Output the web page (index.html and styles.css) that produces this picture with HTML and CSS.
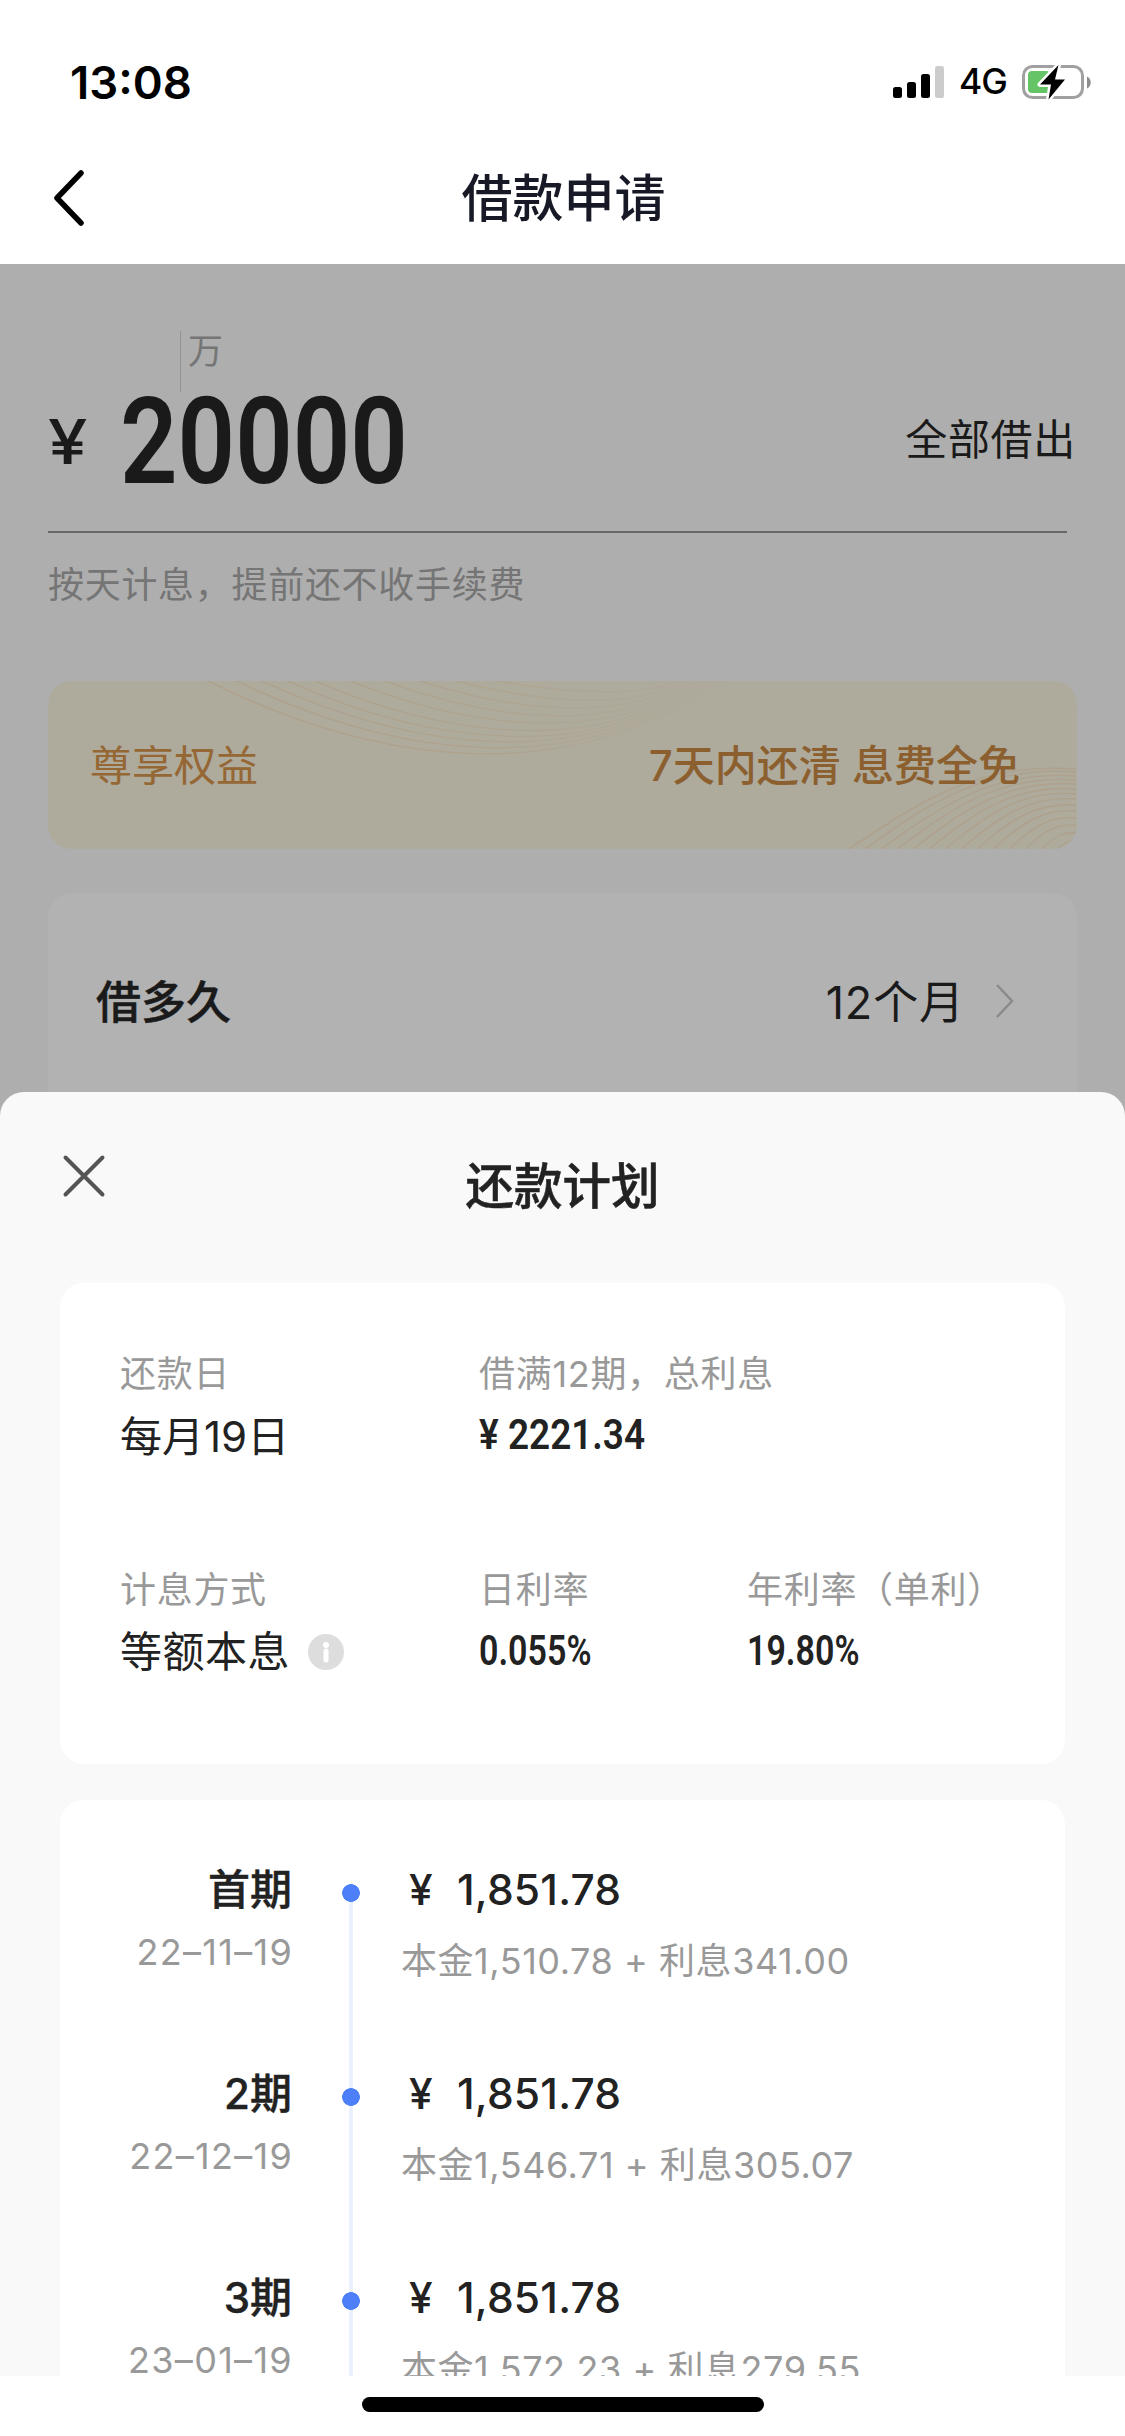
FILE: index.html
```html
<!DOCTYPE html>
<html lang="zh-CN">
<head>
<meta charset="utf-8">
<title>借款申请</title>
<link rel="stylesheet" href="styles.css">
</head>
<body>
<div class="screen">
  <div class="status-bar">
    <span class="clock">13:08</span>
    <div class="status-icons">
      <svg class="signal" width="51" height="32" viewBox="0 0 51 32"><rect x="0" y="21" width="9" height="11" rx="2.5"/><rect x="14" y="16" width="9" height="16" rx="2.5"/><rect x="28" y="8" width="9" height="24" rx="2.5"/><rect x="42" y="0" width="9" height="32" rx="2.5" fill="#ccc"/></svg>
      <span class="network">4G</span>
      <svg class="battery" width="70" height="38" viewBox="0 0 70 38"><rect x="1.5" y="3.5" width="59" height="31" rx="9" fill="none" stroke="#a0a0a0" stroke-width="3"/><path d="M65 13.5c5 2 5 10 0 12z" fill="#8e8e8e"/><rect x="6" y="8" width="22" height="22" rx="4" fill="#65c466"/><path d="M36.500 2 18 21.500h11L26.500 36.500 43 16.500H33z" fill="#000" stroke="#fff" stroke-width="5" stroke-linejoin="round" paint-order="stroke"/></svg>
    </div>
  </div>
  <div class="nav-bar">
    <svg class="back" width="34" height="58" viewBox="0 0 34 58"><path d="M31 4 7 29l24 25" fill="none" stroke="#000" stroke-width="5.500" stroke-linecap="round" stroke-linejoin="round"/></svg>
    <h1 class="nav-title">借款申请</h1>
  </div>
  <div class="page">
    <div class="unit-row"><span class="unit">万</span></div>
    <div class="amount-row">
      <span class="yen">¥</span>
      <span class="amount">20000</span>
      <span class="borrow-all">全部借出</span>
    </div>
    <p class="hint">按天计息，提前还不收手续费</p>
    <div class="banner">
      <svg class="waves" width="1028" height="168" viewBox="0 0 1028 168">
        <defs><linearGradient id="fade" gradientUnits="userSpaceOnUse" x1="160" y1="0" x2="668" y2="0"><stop offset="0" stop-color="#b0987c" stop-opacity=".6"/><stop offset=".6" stop-color="#b0987c" stop-opacity=".4"/><stop offset="1" stop-color="#b0a08a" stop-opacity=".1"/></linearGradient></defs>
        <g fill="none" stroke-width="1.300">
          <path stroke="url(#fade)" d="M160 0C330 85 521 110 680-4M189 0C349 78 529 101 676-4M214 0C366 71 536 92 672-4M240 0C383 65 544 84 668-4M267 0C401 58 552 75 663-4M302 0C425 49 562 64 658-4M337 0C448 41 572 53 653-4M372 0C471 32 582 41 648-4M409 0C496 23 593 30 643-4M449 0C522 13 604 17 638-4"/>
          <path stroke="#b0987c" stroke-opacity=".5" d="M801 168C870 122 930 80 1028 88M817 168C880 123 937 84 1028 91M833 168C892 126 944 89 1028 95M849 168C903 128 951 93 1028 99M865 168C914 130 958 98 1028 103M881 168C925 133 965 103 1028 108M897 168C936 136 972 108 1028 113M913 168C948 139 979 114 1028 118M929 168C959 142 985 121 1028 124M945 168C970 146 992 127 1028 130M961 168C981 150 999 134 1028 137M977 168C992 154 1006 142 1028 144M993 168C1004 159 1013 150 1028 152M1009 168C1015 163 1020 159 1028 160"/>
        </g>
      </svg>
      <span class="banner-left">尊享权益</span>
      <span class="banner-right">7天内还清 息费全免</span>
    </div>
    <div class="term-card">
      <span class="term-label">借多久</span>
      <span class="term-value">12个月</span>
      <svg width="20" height="36" viewBox="0 0 20 36"><path d="M2 2 17 18 2 34" fill="none" stroke="#8a8a8a" stroke-width="2.500"/></svg>
    </div>
  </div>
  <div class="sheet">
    <div class="sheet-head">
      <svg class="close" width="44" height="44" viewBox="0 0 44 44"><path d="M3.500 3.500l37 37m0-37-37 37" fill="none" stroke="#555" stroke-width="4" stroke-linecap="round"/></svg>
      <h2 class="sheet-title">还款计划</h2>
    </div>
    <div class="summary">
      <div class="cell"><span class="label">还款日</span><span class="value">每月19日</span></div>
      <div class="cell wide"><span class="label">借满12期，总利息</span><span class="value number"><span class="din">¥ 2221.34</span></span></div>
      <div class="cell"><span class="label">计息方式</span><span class="value with-icon">等额本息<svg width="36" height="36" viewBox="0 0 36 36"><circle cx="18" cy="18" r="18" fill="#ddd"/><circle cx="18" cy="11" r="3" fill="#fff"/><path d="M18 17v9" stroke="#fff" stroke-width="5" stroke-linecap="round"/></svg></span></div>
      <div class="cell"><span class="label">日利率</span><span class="value number"><span class="din rate">0.055%</span></span></div>
      <div class="cell"><span class="label">年利率（单利）</span><span class="value number"><span class="din rate">19.80%</span></span></div>
    </div>
    <div class="schedule">
      <div class="period">
        <div class="when"><span class="nth">首期</span><span class="date">22–11–19</span></div>
        <div class="rail"></div>
        <div class="pay"><span class="total"><span class="sign">¥</span>1,851.78</span><span class="detail">本金1,510.78 + 利息341.00</span></div>
      </div>
      <div class="period">
        <div class="when"><span class="nth">2期</span><span class="date">22–12–19</span></div>
        <div class="rail"></div>
        <div class="pay"><span class="total"><span class="sign">¥</span>1,851.78</span><span class="detail">本金1,546.71 + 利息305.07</span></div>
      </div>
      <div class="period">
        <div class="when"><span class="nth">3期</span><span class="date">23–01–19</span></div>
        <div class="rail"></div>
        <div class="pay"><span class="total"><span class="sign">¥</span>1,851.78</span><span class="detail">本金1,572.23 + 利息279.55</span></div>
      </div>
    </div>
  </div>
  <div class="home-area"><div class="home-indicator"></div></div>
</div>
</body>
</html>
```
FILE: styles.css
```css
* { box-sizing: border-box; margin: 0; padding: 0; }
body {
  width: 1125px;
  font-family: Inter, "Noto Sans CJK SC", sans-serif;
  color: #222;
  background: #fff;
}
svg { display: block; flex: none; }
span { white-space: nowrap; }
.screen { display: flex; flex-direction: column; width: 1125px; height: 2436px; overflow: hidden; }

.status-bar { display: flex; justify-content: space-between; height: 132px; padding: 57px 33px 0 70px; color: #000; }
.clock { font-size: 45.500px; font-weight: 600; line-height: 52px; }
.status-icons { display: flex; height: 50px; align-items: center; }
.network { width: 78px; padding-left: 15px; font-size: 35.500px; font-weight: 500; line-height: 52px; letter-spacing: -1px; }

.nav-bar { display: flex; align-items: center; height: 132px; padding: 0 50px; }
.back { margin-right: -34px; }
.nav-title { flex: 1; padding: 2px 0 0 2px; text-align: center; font-size: 51px; font-weight: 500; line-height: 60px; color: #171a26; }

.page { flex: none; height: 852px; padding: 67px 48px 0; background: #aeaeae; overflow: hidden; }
.unit-row { height: 61px; margin-left: 132px; padding-left: 7px; border-left: 1px solid #939393; }
.unit { font-size: 35px; line-height: 40px; color: #757575; }
.amount-row { display: flex; align-items: center; width: 1028px; height: 139px; padding-bottom: 40px; color: #1a1a1a; }
.yen { width: 72px; font-size: 62px; font-weight: 500; line-height: 98px; transform: scaleX(1.14); transform-origin: left; }
.amount { font-family: Roboto, sans-serif; font-size: 120px; font-weight: 600; line-height: 98px; transform: scaleX(.84); transform-origin: left; }
.borrow-all { margin-left: auto; padding-bottom: 3px; font-size: 42px; letter-spacing: .7px; line-height: 60px; }
.hint { width: 1019px; border-top: 2px solid #686868; padding-top: 29px; font-size: 36px; letter-spacing: .7px; line-height: 46px; color: #757575; }

.banner { display: flex; align-items: center; justify-content: space-between; position: relative; width: 1029px; height: 168px; margin-top: 73px; padding: 0 57px 5px 42px; border-radius: 24px; background: #aeaa9c; font-size: 42px; overflow: hidden; }
.waves { position: absolute; left: 0; top: 0; }
.banner-left { position: relative; color: #956734; }
.banner-right { position: relative; color: #8c5f2f; font-weight: 500; }

.term-card { display: flex; align-items: center; width: 1029px; height: 240px; margin-top: 44px; padding: 0 62px 28px 48px; border-radius: 24px; background: #b2b2b2; color: #1a1a1a; font-size: 45px; }
.term-card svg { position: relative; top: 2px; }
.term-label { font-weight: 500; -webkit-text-stroke: .5px; }
.term-value { margin-left: auto; margin-right: 30px; letter-spacing: .9px; }

.sheet { flex: none; height: 1284px; margin-top: -24px; padding: 0 60px; border-radius: 24px 24px 0 0; background: #f9f9f9; overflow: hidden; position: relative; }
.sheet-head { display: flex; height: 191px; padding-top: 62px; }
.close { margin-left: 2px; margin-right: -46px; }
.sheet-title { flex: 1; text-align: center; font-size: 48.500px; font-weight: 500; line-height: 66px; -webkit-text-stroke: .5px; }

.summary { display: grid; grid-template-columns: 359px 268px 1fr; grid-template-rows: 216px 1fr; height: 481px; padding: 61px 0 0 60px; border-radius: 24px; background: #fff; }
.cell { display: flex; flex-direction: column; }
.wide { grid-column: span 2; }
.label { font-size: 36px; line-height: 60px; letter-spacing: .7px; color: #999; }
.value { font-size: 42px; line-height: 66px; }
.with-icon { display: flex; align-items: center; gap: 18px; height: 63px; letter-spacing: .5px; }
.number { line-height: 60px; }
.din { display: inline-block; font-family: Roboto, sans-serif; font-size: 42px; font-weight: 600; line-height: 60px; transform: scaleX(.88); transform-origin: left; }
.rate { transform: scaleX(.81); }

.schedule { height: 700px; margin-top: 36px; padding-top: 60px; border-radius: 24px 24px 0 0; background: #fff; }
.period { display: flex; height: 204px; }
.when { display: flex; flex-direction: column; align-items: flex-end; width: 232px; }
.nth { font-size: 42px; font-weight: 500; line-height: 60px; -webkit-text-stroke: .4px; }
.date { margin-right: -1px; font-size: 36px; letter-spacing: 1.300px; line-height: 64px; color: #999; }
.rail { width: 18px; height: 204px; margin: 24px 41px 0 50px; background: radial-gradient(circle 9px at 9px 9px, #4c7ff8 8.500px, transparent 9.200px), linear-gradient(#ebf0fe, #ebf0fe) 7px 9px / 4px 204px no-repeat; }
.pay { display: flex; flex-direction: column; }
.total { display: flex; padding-left: 8px; font-size: 42.500px; font-weight: 500; line-height: 60px; letter-spacing: .2px; }
.sign { width: 48px; }
.detail { font-size: 36px; letter-spacing: .55px; line-height: 82px; color: #999; }

.home-area { display: flex; flex: none; justify-content: center; height: 60px; padding-top: 21px; background: #fff; }
.home-indicator { width: 402px; height: 15px; border-radius: 8px; background: #000; }
```
